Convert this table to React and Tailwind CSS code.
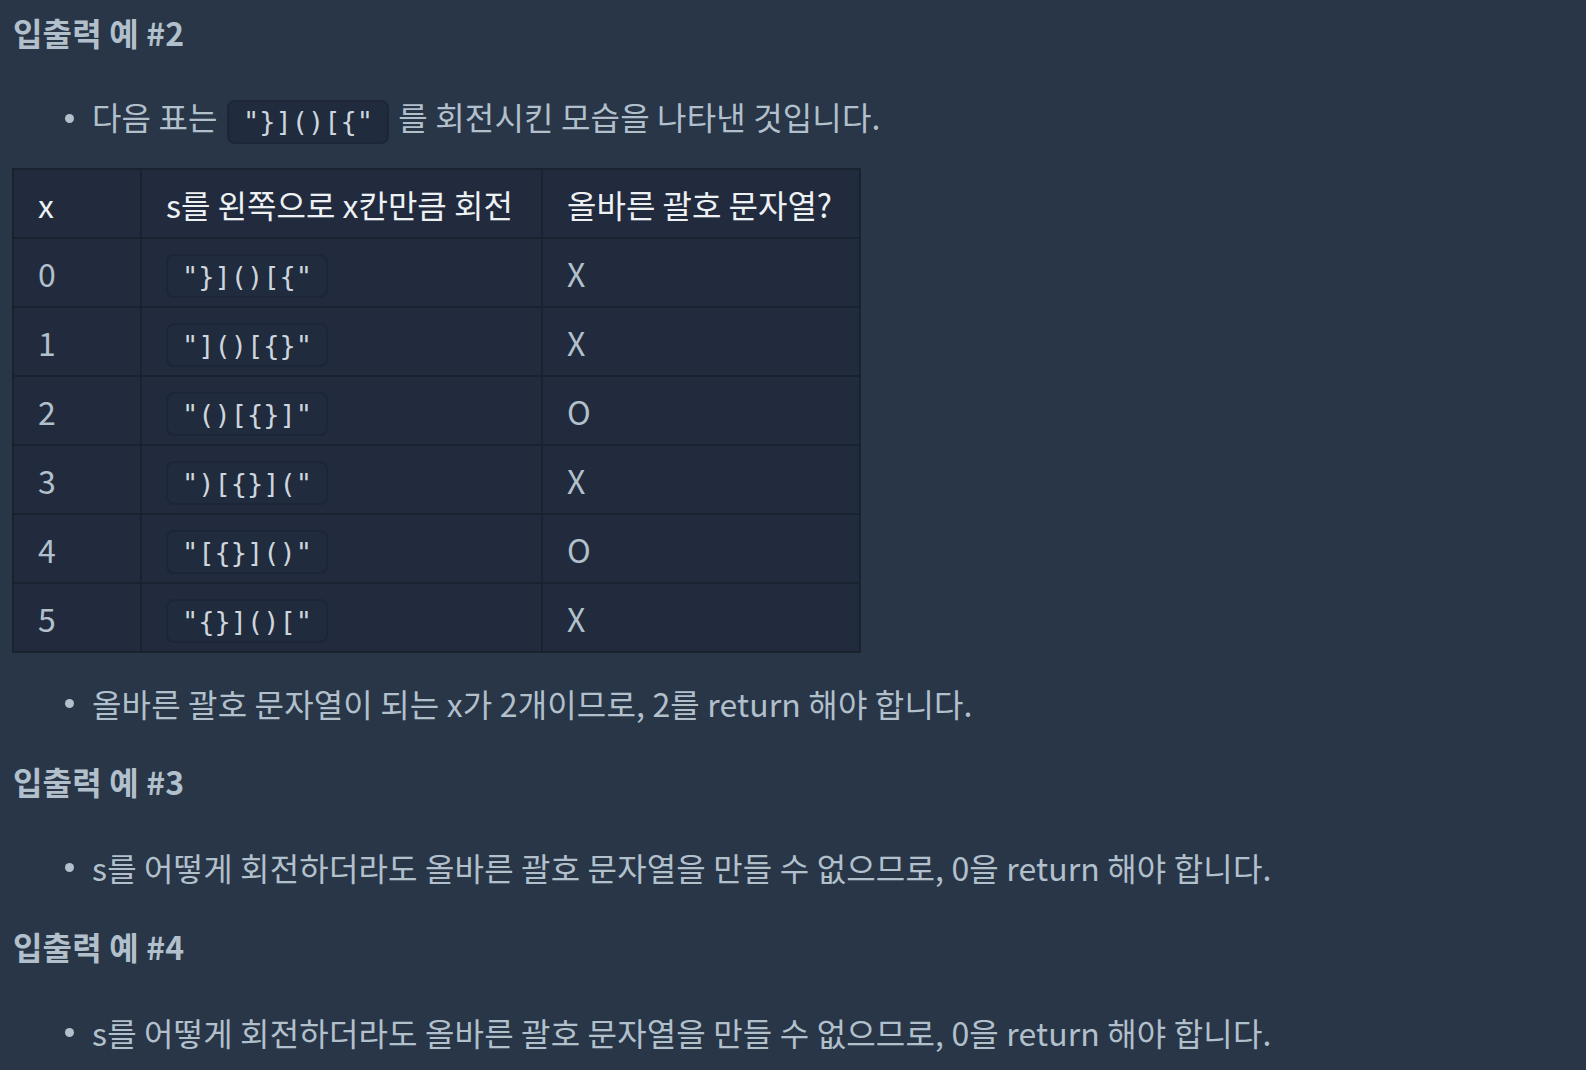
import React from "react";

const rows = [
  ["0", '"}]()[{"', "X"],
  ["1", '"]()[{}"', "X"],
  ["2", '"()[{}]"', "O"],
  ["3", '")[{}]("', "X"],
  ["4", '"[{}]()"', "O"],
  ["5", '"{}]()["', "X"],
];

function Code({ children, className = "" }) {
  return (
    <code className={"inline-flex items-center h-[44px] px-[14px] rounded-[8px] border-2 border-[#1c2636] bg-[#202b3d] text-[#cdd5de] text-[27px] leading-none tracking-normal [font-family:'DejaVu_Sans_Mono',monospace] align-middle " + className}>
      {children}
    </code>
  );
}

function Bullet({ children, className = "" }) {
  return (
    <div className={"flex items-center h-[48px] " + className}>
      <span className="ml-[65px] mr-[18px] w-[9px] h-[9px] rounded-full bg-[#b2c0cc] shrink-0" />
      <span className="whitespace-nowrap">{children}</span>
    </div>
  );
}

function Heading({ children, className = "" }) {
  return (
    <div className={"h-[48px] leading-[48px] font-bold text-[32px] text-[#b2c0cc] pl-[13px] " + className}>
      {children}
    </div>
  );
}

export default function App() {
  return (
    <div className="w-[1586px] h-[1070px] overflow-hidden bg-[#283648] text-[#b2c0cc] text-[32px] leading-[48px] tracking-[0.15px] [font-family:'Noto_Sans_CJK_KR','Noto_Sans',sans-serif] pt-[8px]">
      <Heading>입출력 예 #2</Heading>
      <Bullet className="mt-[38px]">
        다음 표는 <Code className="mx-[2px]">{'"}]()[{"'}</Code> 를 회전시킨 모습을 나타낸 것입니다.
      </Bullet>
      <div className="ml-[12px] mt-[26px]">
        <table className="border-collapse bg-[#212b3d] border-2 border-[#19222f] tracking-normal whitespace-nowrap">
          <thead>
            <tr className="h-[69px]">
              <th className="w-[128px] border-2 border-[#19222f] px-[24px] text-left font-normal text-[#eef1f4]">x</th>
              <th className="w-[401px] border-2 border-[#19222f] px-[24px] text-left font-normal text-[#eef1f4]">s를 왼쪽으로 x칸만큼 회전</th>
              <th className="w-[318px] border-2 border-[#19222f] px-[24px] text-left font-normal text-[#eef1f4]">올바른 괄호 문자열?</th>
            </tr>
          </thead>
          <tbody>
            {rows.map((r) => (
              <tr key={r[0]} className="h-[69px]">
                <td className="border-2 border-[#19222f] px-[24px]">{r[0]}</td>
                <td className="border-2 border-[#19222f] px-[24px]">
                  <Code>{r[1]}</Code>
                </td>
                <td className="border-2 border-[#19222f] px-[24px]">{r[2]}</td>
              </tr>
            ))}
          </tbody>
        </table>
      </div>
      <Bullet className="mt-[26px]">올바른 괄호 문자열이 되는 x가 2개이므로, 2를 return 해야 합니다.</Bullet>
      <Heading className="mt-[30px]">입출력 예 #3</Heading>
      <Bullet className="mt-[38px]">s를 어떻게 회전하더라도 올바른 괄호 문자열을 만들 수 없으므로, 0을 return 해야 합니다.</Bullet>
      <Heading className="mt-[31px]">입출력 예 #4</Heading>
      <Bullet className="mt-[38px]">s를 어떻게 회전하더라도 올바른 괄호 문자열을 만들 수 없으므로, 0을 return 해야 합니다.</Bullet>
    </div>
  );
}
